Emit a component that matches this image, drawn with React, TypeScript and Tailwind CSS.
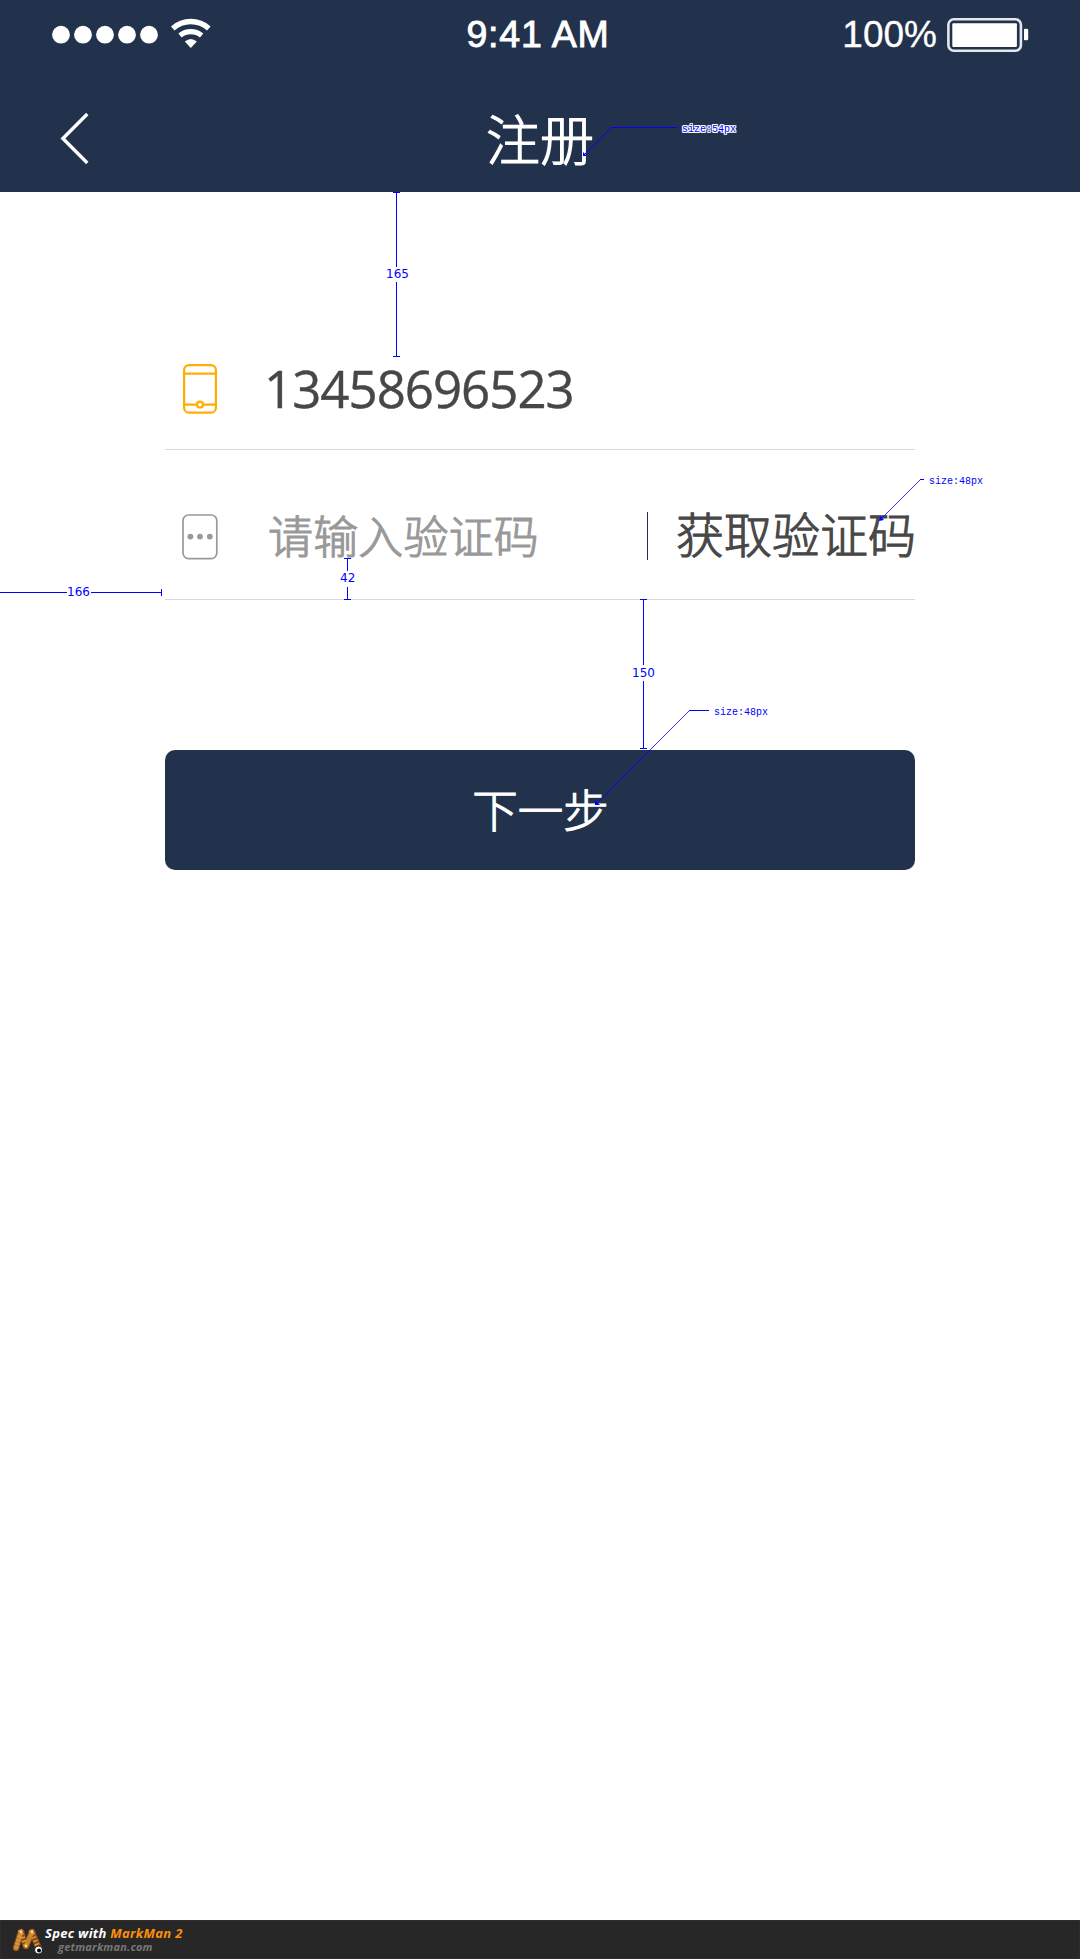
import React from "react";

const CJK = "font-['Open_Sans','Noto_Sans_CJK_SC',sans-serif]";

function StatusBar() {
  return (
    <div className="flex h-[69px] items-center pl-[52px] pr-[51px] text-white">
      <div className="flex flex-1 items-center">
        <svg width="160" height="40" viewBox="0 0 160 40" fill="white">
          <circle cx="9" cy="19.7" r="8.9" />
          <circle cx="31" cy="19.7" r="8.9" />
          <circle cx="53" cy="19.7" r="8.9" />
          <circle cx="75" cy="19.7" r="8.9" />
          <circle cx="97" cy="19.7" r="8.9" />
          <g fill="none" stroke="white">
            <path d="M120.8 13.4 A27 27 0 0 1 156.8 13.4" strokeWidth="5.4" />
            <path d="M128 20.4 A17 17 0 0 1 149.6 20.4" strokeWidth="5.2" />
          </g>
          <path d="M132.8 26.6 Q138.8 21.4 144.8 26.6 L138.8 33 Z" />
        </svg>
      </div>
      <div className="mr-[5px] pt-px font-['Liberation_Sans',sans-serif] text-[37.5px] leading-none tracking-[0.8px] whitespace-pre [-webkit-text-stroke:0.9px_white]">
        9:41 AM
      </div>
      <div className="flex flex-1 items-center justify-end">
        <span className="mr-[10px] font-['Liberation_Sans',sans-serif] text-[37px] leading-none [-webkit-text-stroke:0.3px_white]">
          100%
        </span>
        <svg width="82" height="34" viewBox="0 0 82 34">
          <rect x="1.4" y="1.3" width="72.5" height="31.4" rx="5.5" fill="none" stroke="#e4e7ec" strokeWidth="2.6" />
          <rect x="5.3" y="5.3" width="64.6" height="23.6" rx="1" fill="white" />
          <path d="M77 11 Q81.2 10 81.2 12 V21 Q81.2 23 77 22 Z" fill="white" />
        </svg>
      </div>
    </div>
  );
}

function Header() {
  return (
    <header className="h-[192px] bg-[#23324c]">
      <StatusBar />
      <div className="flex h-[123px] items-center pl-[60px] pr-[60px]">
        <button className="flex w-[60px] pt-[15px]" aria-label="Back">
          <svg width="30" height="52" viewBox="0 0 30 52" fill="none" stroke="white" strokeWidth="3.4">
            <path d="M27.3 2 L2.9 26.5 L27.3 51" />
          </svg>
        </button>
        <h1
          className={`flex-1 pt-[19px] text-center text-[54px] leading-[72px] font-light text-white [-webkit-text-stroke:1.2px_white] ${CJK}`}
        >
          注册
        </h1>
        <div className="w-[60px]" />
      </div>
    </header>
  );
}

function PhoneIcon() {
  return (
    <svg width="36" height="52" viewBox="0 0 36 52" fill="none" stroke="#ffae00" strokeWidth="2.2">
      <rect x="2.1" y="2.1" width="31.8" height="47.6" rx="5" />
      <path d="M2 10.6 H34 M2 41.6 H14.5 M21.5 41.6 H34" />
      <circle cx="18" cy="41.6" r="3" />
    </svg>
  );
}

function CodeIcon() {
  return (
    <svg width="36" height="46" viewBox="0 0 36 46" fill="#999">
      <rect x="1" y="1" width="33.8" height="43.6" rx="5.5" fill="none" stroke="#999" strokeWidth="1.7" />
      <circle cx="8.4" cy="22.6" r="2.9" />
      <circle cx="18" cy="22.6" r="2.9" />
      <circle cx="27.8" cy="22.6" r="2.9" />
    </svg>
  );
}

function Annotations() {
  const num = "absolute font-['DejaVu_Sans',sans-serif] text-[12px] leading-[14px]";
  const size = "absolute font-['Liberation_Mono',monospace] text-[10px] leading-[12px]";
  return (
    <div className="pointer-events-none absolute inset-0 text-[#0000ff]">
      <svg className="absolute inset-0" width="1080" height="900" fill="none" stroke="#0000ff" strokeWidth="1">
        <g shapeRendering="crispEdges">
          <path d="M393 192.5 H400 M396.5 192 V267 M396.5 282 V357 M393 356.5 H400" />
          <path d="M344 558.5 H351 M347.5 558 V571 M347.5 587 V600 M344 599.5 H351" />
          <path d="M0 592.5 H67 M91 592.5 H162 M161.5 589 V596" />
          <path d="M640 599.5 H647 M643.5 599 V665 M643.5 681 V749 M640 748.5 H647" />
          <path d="M611 127.5 H677 M920 479.5 H924 M689 710.5 H709" />
        </g>
        <path d="M611.5 127.5 L585 154" />
        <path d="M920.5 479.5 L881 519" strokeWidth="0.8" />
        <path d="M689.5 710.5 L597 803" strokeWidth="0.8" />
        <g fill="#0000ff" stroke="none">
          <path d="M583 152 L587 156 H583 Z" />
          <path d="M880 516 L884 520 L879 521 Z" />
          <path d="M595 800 L600 805 H595 Z" />
        </g>
      </svg>
      <span className={`${num} left-[386px] top-[267px]`}>165</span>
      <span className={`${num} left-[340px] top-[571px]`}>42</span>
      <span className={`${num} left-[67px] top-[585px]`}>166</span>
      <span className={`${num} left-[632px] top-[666px]`}>150</span>
      <span
        className={`${size} left-[682px] top-[124px] [text-shadow:1px_0_white,-1px_0_white,0_1px_white,0_-1px_white,1px_1px_white,-1px_-1px_white,1px_-1px_white,-1px_1px_white]`}
      >
        size:54px
      </span>
      <span className={`${size} left-[929px] top-[476px]`}>size:48px</span>
      <span className={`${size} left-[714px] top-[707px]`}>size:48px</span>
    </div>
  );
}

function Footer() {
  return (
    <footer className="flex h-[39px] items-start border border-[#332b2b] bg-[#272727] pl-[11px] font-['Open_Sans',sans-serif] italic">
      <svg className="mt-[6px]" width="32" height="30" viewBox="0 0 32 30" fill="none" strokeLinecap="round">
        <g stroke="#8a4a12" strokeWidth="6.5">
          <path d="M4 21 L9 5" />
          <path d="M14 19 L20 5" />
          <path d="M9 5 L14 19" />
          <path d="M20 5 L27 22" />
        </g>
        <g stroke="#c98330" strokeWidth="4.5">
          <path d="M4 21 L9 5" />
          <path d="M14 19 L20 5" />
        </g>
        <g stroke="#d99a4a" strokeWidth="4.5" strokeDasharray="1.5 2.2" strokeLinecap="butt">
          <path d="M8 3 L14 20" />
          <path d="M19 3 L26 20" />
          <path d="M4 21 L8 8" />
        </g>
        <circle cx="9" cy="5" r="1.2" fill="#ffe0a0" />
        <circle cx="20" cy="5" r="1.2" fill="#ffe0a0" />
        <circle cx="14" cy="19" r="1.2" fill="#ffe0a0" />
        <circle cx="26.5" cy="23" r="4" fill="white" stroke="#111" strokeWidth="1" />
        <circle cx="27" cy="23.4" r="2" fill="black" />
      </svg>
      <div className="whitespace-nowrap">
        <div className="mt-[3px] pl-px text-[13px] leading-[18px] font-bold tracking-[0.31px] text-white">
          Spec with <span className="text-[#ff8f0a]">MarkMan 2</span>
        </div>
        <div className="pl-[14px] text-[11px] leading-[10px] font-bold tracking-[0.2px] text-[#777]">getmarkman.com</div>
      </div>
    </footer>
  );
}

export default function App() {
  return (
    <div className="relative flex h-[1959px] w-[1080px] flex-col overflow-hidden bg-white">
      <Header />
      <main className="flex-1 px-[165px] pt-[108px]">
        <div className="flex h-[150px] items-center border-b border-[#d9d9d9] pl-[17px]">
          <div className="pt-[28px]">
            <PhoneIcon />
          </div>
          <span className="ml-[46px] pt-[26px] font-['Open_Sans',sans-serif] text-[51px] leading-[70px] tracking-[-1px] text-[#474747] [-webkit-text-stroke:0.4px_#474747]">
            13458696523
          </span>
        </div>
        <div className="flex h-[150px] items-center border-b border-[#d9d9d9] pl-[17px]">
          <div className="pt-[24px]">
            <CodeIcon />
          </div>
          <span
            className={`ml-[50px] pt-[25px] text-[45px] leading-[60px] font-light tracking-[0.15px] text-[#999] [-webkit-text-stroke:1.1px_#999] ${CJK}`}
          >
            请输入验证码
          </span>
          <div className="mt-[22px] ml-auto h-[48px] w-px bg-[#23324c]" />
          <button
            className={`-mr-px ml-[28px] pt-[21px] text-[48px] leading-[60px] font-light text-[#474747] [-webkit-text-stroke:1.1px_#474747] ${CJK}`}
          >
            获取验证码
          </button>
        </div>
        <button
          className={`mt-[150px] block h-[120px] w-full rounded-[10px] bg-[#23324c] pl-px text-[45.5px] leading-[120px] font-light text-white [-webkit-text-stroke:1.1px_white] ${CJK}`}
        >
          下一步
        </button>
      </main>
      <Footer />
      <Annotations />
    </div>
  );
}
